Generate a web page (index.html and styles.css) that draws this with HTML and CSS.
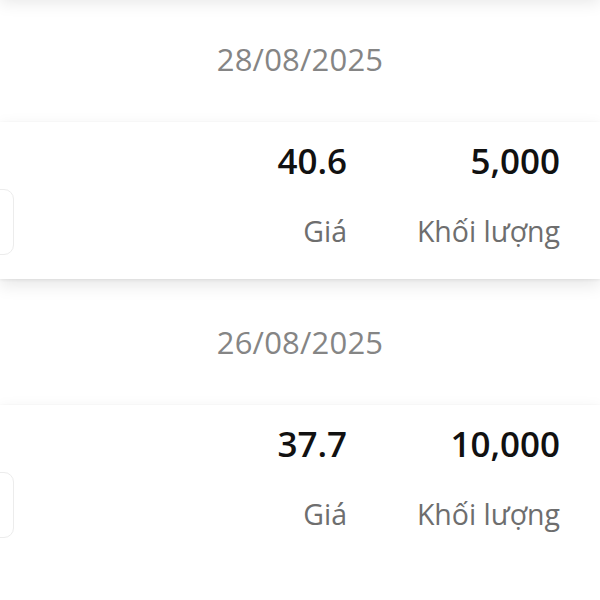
FILE: index.html
```html
<!DOCTYPE html>
<html lang="vi">
<head>
  <meta charset="UTF-8" />
  <meta name="viewport" content="width=device-width, initial-scale=1.0" />
  <title>Lịch sử khớp lệnh</title>
  <link rel="stylesheet" href="styles.css">
</head>
<body>
  <div class="list">
    <div class="card card-prev"></div>

    <div class="date-row">28/08/2025</div>
    <div class="card">
      <div class="card-side"><div class="side-btn"></div></div>
      <div class="col col-price">
        <span class="value">40.6</span>
        <span class="label">Giá</span>
      </div>
      <div class="col col-volume">
        <span class="value">5,000</span>
        <span class="label">Khối lượng</span>
      </div>
    </div>

    <div class="date-row">26/08/2025</div>
    <div class="card">
      <div class="card-side"><div class="side-btn"></div></div>
      <div class="col col-price">
        <span class="value">37.7</span>
        <span class="label">Giá</span>
      </div>
      <div class="col col-volume">
        <span class="value">10,000</span>
        <span class="label">Khối lượng</span>
      </div>
    </div>
  </div>
</body>
</html>
```

FILE: styles.css
```css
:root {
  --bg: #ffffff;
  --text: #111111;
  --muted: #6e6e6e;
  --date: #858585;
}

* { box-sizing: border-box; }

html, body {
  margin: 0;
  background: var(--bg);
  font-family: 'Open Sans', 'Noto Sans', sans-serif;
  color: var(--text);
  overflow: hidden;
}

.list {
  display: flex;
  flex-direction: column;
  margin-top: -161px;
}

.date-row {
  height: 126px;
  display: flex;
  align-items: center;
  justify-content: center;
  font-size: 31px;
  color: var(--date);
  letter-spacing: 0.2px;
}

.card {
  height: 157px;
  display: flex;
  align-items: stretch;
  padding-right: 40px;
  background: #ffffff;
  box-shadow: 0 6px 16px rgba(0, 0, 0, 0.1), 0 1px 3px rgba(0, 0, 0, 0.07);
  position: relative;
  z-index: 1;
}

.card-side {
  flex: 1;
  display: flex;
  align-items: flex-end;
  padding-bottom: 24px;
}

.side-btn {
  width: 62px;
  height: 66px;
  margin-left: -48px;
  border: 1px solid #ececec;
  border-radius: 10px;
}

.col {
  display: flex;
  flex-direction: column;
  align-items: flex-end;
  padding-top: 17px;
}

.col-volume {
  width: 213px;
}

.value {
  font-size: 35px;
  font-weight: 600;
  line-height: 44px;
}

.label {
  margin-top: 28px;
  font-size: 28.5px;
  line-height: 40px;
  color: var(--muted);
}
```
